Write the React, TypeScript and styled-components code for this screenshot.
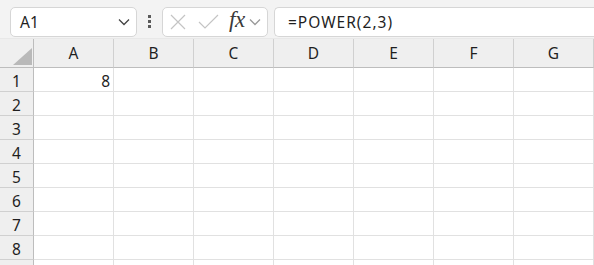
import styled, { createGlobalStyle } from 'styled-components';

const GlobalStyle = createGlobalStyle`
  html, body {
    margin: 0;
    padding: 0;
    background: #ffffff;
    font-family: 'Noto Sans', 'Open Sans', sans-serif;
    color: #1f1f1f;
  }
  * { box-sizing: border-box; }
`;

const COLUMNS = ['A', 'B', 'C', 'D', 'E', 'F', 'G'];
const ROWS = [1, 2, 3, 4, 5, 6, 7, 8, 9];

const Sheet = styled.div`
  width: 594px;
  height: 265px;
  overflow: hidden;
  background: #fff;
`;

const Toolbar = styled.div`
  display: flex;
  align-items: center;
  height: 39px;
  padding: 7px 0 2px 10px;
  background: #f3f3f3;
  border-bottom: 1px solid #e8e8e8;
`;

const Box = styled.div`
  display: flex;
  align-items: center;
  height: 30px;
  background: #fff;
  border: 1px solid #d6d6d6;
  border-radius: 5px;
`;

const NameBox = styled(Box)`
  width: 127px;
  padding: 0 6px 0 9px;
  justify-content: space-between;
  font-size: 15.5px;
`;

const Dots = styled.div`
  display: flex;
  flex-direction: column;
  gap: 2px;
  margin: 0 11px 0 11px;

  span {
    width: 3px;
    height: 3px;
    background: #5a5a5a;
  }
`;

const FxBox = styled(Box)`
  width: 106px;
  padding: 0 4px 0 7px;
`;

const Gap = styled.span<{ $w: number }>`
  width: ${(p) => p.$w}px;
`;

const FxText = styled.span`
  font-family: 'Liberation Serif', serif;
  font-style: italic;
  font-size: 23px;
  color: #3a3a3a;
  margin: -4px 4px 0 10px;
  letter-spacing: -0.5px;
`;

const FormulaBox = styled(Box)`
  flex: 1;
  margin-left: 6px;
  border-right: none;
  border-radius: 5px 0 0 5px;
  padding-left: 13px;
  font-size: 15.5px;
  letter-spacing: 1px;
`;

const Grid = styled.div`
  display: grid;
  grid-template-columns: 34px repeat(7, 80px);
  grid-template-rows: 29px repeat(9, 24px);
`;

const HeaderCell = styled.div<{ $corner?: boolean }>`
  position: relative;
  display: flex;
  align-items: flex-end;
  justify-content: center;
  padding-bottom: 3px;
  background: #efefef;
  border-right: 1px solid ${(p) => (p.$corner ? '#bdbdbd' : '#d0d0d0')};
  border-bottom: 1px solid #bdbdbd;
  font-size: 15.5px;
  color: #1f1f1f;
`;

const Corner = styled.div`
  position: absolute;
  right: 1px;
  bottom: 2px;
  width: 0;
  height: 0;
  border-left: 19px solid transparent;
  border-bottom: 17px solid #b9b9b9;
`;

const RowHeader = styled.div`
  display: flex;
  align-items: center;
  justify-content: center;
  padding-top: 2px;
  background: #efefef;
  border-right: 1px solid #bdbdbd;
  border-bottom: 1px solid #d0d0d0;
  font-size: 15.5px;
`;

const Cell = styled.div<{ $num?: boolean }>`
  display: flex;
  align-items: center;
  justify-content: ${(p) => (p.$num ? 'flex-end' : 'flex-start')};
  padding: 2px 3px 0 3px;
  border-right: 1px solid #e1e1e1;
  border-bottom: 1px solid #e1e1e1;
  font-size: 15.5px;
`;

function Chevron({ color = '#444' }: { color?: string }) {
  return (
    <svg width="12" height="8" viewBox="0 0 12 8">
      <polyline points="1,1.5 6,6.5 11,1.5" fill="none" stroke={color} strokeWidth="1.3" />
    </svg>
  );
}

function Cross() {
  return (
    <svg width="16" height="16" viewBox="0 0 16 16">
      <path d="M1 1 L15 15 M15 1 L1 15" stroke="#c4c4c4" strokeWidth="1.2" fill="none" />
    </svg>
  );
}

function Check() {
  return (
    <svg width="21" height="16" viewBox="0 0 21 16">
      <polyline points="1,8 7,14 20,1" stroke="#c4c4c4" strokeWidth="1.2" fill="none" />
    </svg>
  );
}

const cells: Record<string, string> = { A1: '8' };

export default function App() {
  return (
    <Sheet>
      <GlobalStyle />
      <Toolbar>
        <NameBox>
          <span>A1</span>
          <Chevron />
        </NameBox>
        <Dots>
          <span />
          <span />
          <span />
        </Dots>
        <FxBox>
          <Cross />
          <Gap $w={12} />
          <Check />
          <FxText>fx</FxText>
          <Chevron color="#9a9a9a" />
        </FxBox>
        <FormulaBox>=POWER(2,3)</FormulaBox>
      </Toolbar>
      <Grid>
        <HeaderCell $corner>
          <Corner />
        </HeaderCell>
        {COLUMNS.map((c) => (
          <HeaderCell key={c}>{c}</HeaderCell>
        ))}
        {ROWS.map((r) => [
          // the ninth row only shows its top edge, so its number stays hidden
          <RowHeader key={`h${r}`}>{r < 9 ? r : ''}</RowHeader>,
          ...COLUMNS.map((c) => {
            const v = cells[`${c}${r}`];
            return (
              <Cell key={`${c}${r}`} $num={v !== undefined}>
                {v}
              </Cell>
            );
          }),
        ])}
      </Grid>
    </Sheet>
  );
}
